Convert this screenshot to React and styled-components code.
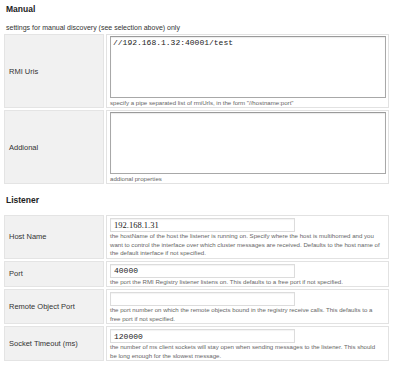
import React from "react";
import styled, { createGlobalStyle } from "styled-components";

const GlobalStyle = createGlobalStyle`
  body {
    margin: 0;
    background: #fff;
    font-family: "Liberation Sans", Arial, sans-serif;
    color: #333;
  }
`;

const Page = styled.div`
  width: 400px;
  padding: 3px 2px 0;
  box-sizing: border-box;
`;

const SectionTitle = styled.h3`
  margin: ${(props) => props.$top || 0}px 0 0 4px;
  font-size: 8.5px;
  line-height: 12px;
  font-weight: bold;
  color: #222;
`;

const Description = styled.p`
  margin: 9px 0 0 4px;
  font-size: 7px;
  line-height: 8px;
  color: #333;
`;

const Table = styled.table`
  width: 389px;
  margin-top: ${(props) => props.$top || 0}px;
  border-collapse: separate;
  border-spacing: 2px;
  table-layout: fixed;
`;

const LabelCell = styled.td`
  width: 90px;
  padding: 0 4px;
  background: #f1f1f1;
  border: 1px solid #e4e4e4;
  font-size: 7.5px;
  color: #333;
  vertical-align: middle;
`;

const ValueCell = styled.td`
  padding: 1px 3px 0 3px;
  background: #fff;
  border: 1px solid #e2e2e2;
  vertical-align: top;
`;

const TextArea = styled.textarea`
  display: block;
  width: 276px;
  height: 62px;
  margin: 0;
  padding: 1px 2px;
  box-sizing: border-box;
  border: 1px solid #a8a8a8;
  border-top-color: #9a9a9a;
  box-shadow: inset 0 1px 1px rgba(0, 0, 0, 0.08);
  resize: none;
  font-family: "Liberation Mono", "Courier New", monospace;
  font-size: 8px;
  line-height: 9px;
  color: #222;
  outline: none;
`;

const TextInput = styled.input`
  display: block;
  width: 185px;
  height: 14px;
  margin: 1px 0 0;
  padding: 0 3px;
  box-sizing: border-box;
  border: 1px solid #dcdcdc;
  box-shadow: inset 0 1px 1px rgba(0, 0, 0, 0.05);
  font-family: ${(props) =>
    props.$serif
      ? '"Liberation Serif", "Times New Roman", serif'
      : '"Liberation Mono", "Courier New", monospace'};
  font-size: ${(props) => (props.$serif ? "8.5px" : "8px")};
  color: #222;
  outline: none;
`;

const Help = styled.div`
  font-size: 6.1px;
  line-height: ${(props) => props.$lh || 8.5}px;
  color: #666;
  padding-right: 3px;
`;

const manualRows = [
  {
    label: "RMI Uris",
    value: "//192.168.1.32:40001/test",
    help: 'specify a pipe separated list of rmiUrls, in the form "//hostname:port"',
  },
  {
    label: "Addional",
    value: "",
    help: "addional properties",
  },
];

const listenerRows = [
  {
    label: "Host Name",
    value: "192.168.1.31",
    serif: true,
    help: "the hostName of the host the listener is running on. Specify where the host is multihomed and you want to control the interface over which cluster messages are received. Defaults to the host name of the default interface if not specified.",
  },
  {
    label: "Port",
    value: "40000",
    help: "the port the RMI Registry listener listens on. This defaults to a free port if not specified.",
  },
  {
    label: "Remote Object Port",
    value: "",
    help: "the port number on which the remote objects bound in the registry receive calls. This defaults to a free port if not specified.",
  },
  {
    label: "Socket Timeout (ms)",
    value: "120000",
    help: "the number of ms client sockets will stay open when sending messages to the listener. This should be long enough for the slowest message.",
  },
];

export default function App() {
  return (
    <Page>
      <GlobalStyle />
      <SectionTitle>Manual</SectionTitle>
      <Description>settings for manual discovery (see selection above) only</Description>
      <Table>
        <tbody>
          {manualRows.map((row) => (
            <tr key={row.label}>
              <LabelCell>{row.label}</LabelCell>
              <ValueCell>
                <TextArea defaultValue={row.value} />
                <Help $lh={9}>{row.help}</Help>
              </ValueCell>
            </tr>
          ))}
        </tbody>
      </Table>
      <SectionTitle $top={8}>Listener</SectionTitle>
      <Table $top={7}>
        <tbody>
          {listenerRows.map((row) => (
            <tr key={row.label}>
              <LabelCell>{row.label}</LabelCell>
              <ValueCell>
                <TextInput type="text" defaultValue={row.value} $serif={row.serif} />
                <Help>{row.help}</Help>
              </ValueCell>
            </tr>
          ))}
        </tbody>
      </Table>
    </Page>
  );
}
